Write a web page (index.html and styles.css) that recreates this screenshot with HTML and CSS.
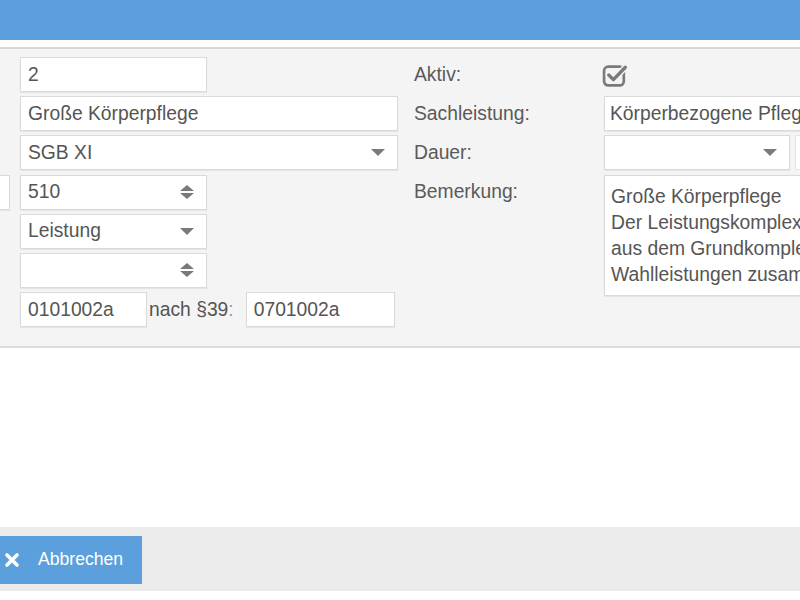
FILE: index.html
```html
<!DOCTYPE html>
<html lang="de">
<head>
<meta charset="utf-8">
<title>Leistung bearbeiten</title>
<link rel="stylesheet" href="styles.css">
</head>
<body>
  <header class="topbar"></header>

  <section class="panel">
    <div class="cols">
      <div class="col-left">
        <div class="row">
          <span class="stub"></span>
          <div class="field w-short">2</div>
        </div>
        <div class="row">
          <span class="stub"></span>
          <div class="field w-full">Große Körperpflege</div>
        </div>
        <div class="row">
          <span class="stub"></span>
          <div class="field w-full select"><span>SGB XI</span><i class="caret"></i></div>
        </div>
        <div class="row">
          <span class="stub field"></span>
          <div class="field w-short select"><span>510</span><i class="spin"><b class="up"></b><b class="down"></b></i></div>
        </div>
        <div class="row">
          <span class="stub"></span>
          <div class="field w-short select"><span>Leistung</span><i class="caret"></i></div>
        </div>
        <div class="row">
          <span class="stub"></span>
          <div class="field w-short select"><span></span><i class="spin"><b class="up"></b><b class="down"></b></i></div>
        </div>
        <div class="row">
          <span class="stub"></span>
          <div class="field w-code">0101002a</div>
          <label class="inline-label">nach §39<span class="colon">:</span></label>
          <div class="field w-code2">0701002a</div>
        </div>
      </div>

      <div class="col-right">
        <div class="rrow">
          <label class="lbl">Aktiv:</label>
          <svg class="check" width="27" height="25" viewBox="0 0 26 24">
            <rect x="2" y="4.5" width="19" height="18" rx="4" fill="none" stroke="#7a7a7a" stroke-width="2.6"/>
            <path d="M6.5 12.5 L11 17 L22.5 5" fill="none" stroke="#f4f4f4" stroke-width="6" stroke-linecap="round" stroke-linejoin="round"/>
            <path d="M6.5 12.5 L11 17 L22.5 5" fill="none" stroke="#7a7a7a" stroke-width="3.2" stroke-linecap="round" stroke-linejoin="round"/>
          </svg>
        </div>
        <div class="rrow">
          <label class="lbl">Sachleistung:</label>
          <div class="field w-wide">Körperbezogene Pflegemaßnahmen</div>
        </div>
        <div class="rrow">
          <label class="lbl">Dauer:</label>
          <div class="field w-dauer select"><span></span><i class="caret"></i></div>
          <div class="field w-next"></div>
        </div>
        <div class="rrow tall">
          <label class="lbl">Bemerkung:</label>
          <div class="field memo">
            <p>Große Körperpflege</p>
            <p>Der Leistungskomplex setzt sich</p>
            <p>aus dem Grundkomplex und</p>
            <p>Wahlleistungen zusammen.</p>
          </div>
        </div>
      </div>
    </div>
  </section>

  <main class="blank"></main>

  <footer class="actions">
    <button class="btn" type="button">
      <svg width="16" height="16" viewBox="0 0 16 16">
        <path d="M3 3 L13 13 M13 3 L3 13" stroke="#ffffff" stroke-width="3.6" stroke-linecap="round"/>
      </svg>
      <span>Abbrechen</span>
    </button>
  </footer>
</body>
</html>
```

FILE: styles.css
```css
html, body {
  margin: 0;
  height: 100%;
}

body {
  display: flex;
  flex-direction: column;
  overflow: hidden;
  background: #ffffff;
  color: #555555;
  font-family: "Liberation Sans", Arial, sans-serif;
  font-size: 19.3px;
}

.topbar {
  height: 40px;
  flex: none;
  background: #5ba0dc;
}

.panel {
  flex: none;
  margin-top: 7px;
  padding: 8px 0 19px;
  background: #f4f4f4;
  border-top: 2px solid #d6d6d6;
  border-bottom: 2px solid #dcdcdc;
}

.cols {
  display: flex;
  gap: 16px;
  margin-left: -80px;
}

/* left column of inputs */
.col-left {
  display: flex;
  flex-direction: column;
  gap: 4.2px;
  flex: none;
  width: 478px;
}

.row {
  display: flex;
  align-items: center;
  gap: 10px;
  height: 35px;
}

.stub {
  width: 90px;
  height: 35px;
  flex: none;
}

.field {
  box-sizing: border-box;
  height: 35px;
  display: flex;
  align-items: center;
  padding: 0 7px;
  background: #ffffff;
  border: 1px solid #dadada;
  box-shadow: 0 1px 1px rgba(0, 0, 0, 0.06);
  white-space: nowrap;
  overflow: hidden;
  flex: none;
}

.stub.field {
  padding: 0;
}

.w-short { width: 187px; }
.w-full  { width: 378px; }
.w-code  { width: 127px; }
.w-code2 { width: 149px; }

.inline-label {
  margin-left: -8px;
  margin-right: 2px;
  color: #555555;
  white-space: nowrap;
}

.inline-label .colon {
  color: #999999;
}

/* select and spinner indicators */
.select {
  justify-content: space-between;
  padding-right: 11px;
}

.caret {
  width: 0;
  height: 0;
  border-left: 7px solid transparent;
  border-right: 7px solid transparent;
  border-top: 7px solid #7a7a7a;
  margin-right: 1px;
}

.spin {
  display: flex;
  flex-direction: column;
  gap: 2px;
  margin-right: 1px;
}

.spin b {
  width: 0;
  height: 0;
  border-left: 7px solid transparent;
  border-right: 7px solid transparent;
}

.spin .up   { border-bottom: 6px solid #7a7a7a; }
.spin .down { border-top: 6px solid #7a7a7a; }

/* right column: labels + controls */
.col-right {
  display: flex;
  flex-direction: column;
  gap: 4.2px;
  flex: none;
}

.rrow {
  display: flex;
  align-items: center;
  height: 35px;
}

.rrow.tall {
  align-items: flex-start;
  height: auto;
}

.lbl {
  width: 190px;
  flex: none;
  color: #5a5a5a;
}

.rrow.tall .lbl {
  margin-top: 6px;
}

.check {
  margin-left: -2px;
  margin-top: -1px;
}

.w-wide  { width: 260px; padding-left: 5px; }
.w-dauer { width: 186px; }
.w-next  { width: 60px; margin-left: 5px; border-color: #e4e4e4; box-shadow: none; }

.memo {
  display: block;
  width: 260px;
  height: 121px;
  padding: 8px 7px 0 6px;
  line-height: 26.3px;
}

.memo p {
  margin: 0;
}

.blank {
  flex: 1;
}

/* button bar */
.actions {
  flex: none;
  height: 64px;
  margin-bottom: 9px;
  background: #ebebeb;
  display: flex;
  align-items: center;
}

.btn {
  display: flex;
  align-items: center;
  gap: 18px;
  height: 48px;
  margin-left: -10px;
  margin-top: 1px;
  padding: 0 19px 0 14px;
  border: 0;
  background: #5ba0dc;
  color: #ffffff;
  font-family: "Liberation Sans", Arial, sans-serif;
  font-size: 17.6px;
}
```
